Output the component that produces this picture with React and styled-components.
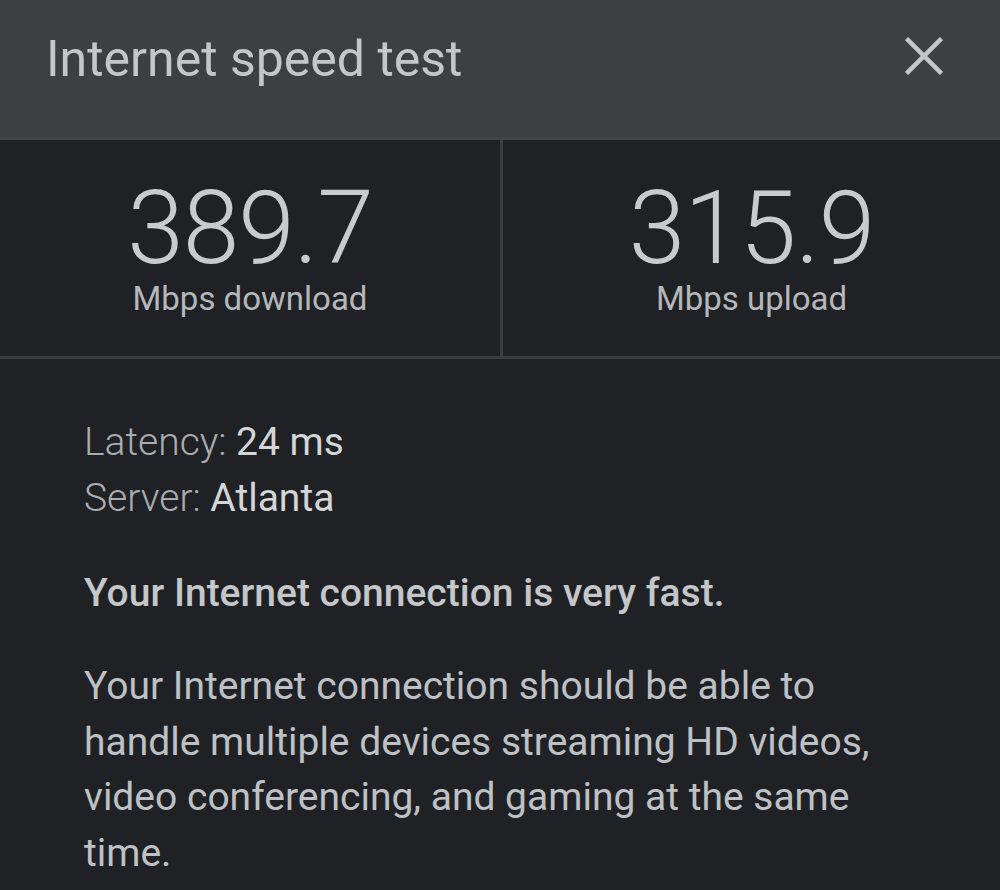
import styled, { createGlobalStyle } from "styled-components";

const GlobalStyle = createGlobalStyle`
  html, body {
    margin: 0;
    padding: 0;
    background: #202124;
  }
  body {
    font-family: Roboto, "Liberation Sans", sans-serif;
  }
`;

const Page = styled.div`
  width: 1000px;
  height: 890px;
  overflow: hidden;
  background: #202124;
  color: #bdc1c6;
`;

const Header = styled.header`
  height: 140px;
  box-sizing: border-box;
  padding: 30px 57px 0 46px;
  display: flex;
  align-items: flex-start;
  justify-content: space-between;
  background: #3c4043;
  border-bottom: 3px solid #404346;
`;

const Title = styled.h1`
  margin: 0;
  font-size: 50px;
  font-weight: 400;
  line-height: 58px;
  color: #c4c7ca;
`;

const CloseButton = styled.button`
  width: 38px;
  height: 38px;
  padding: 0;
  margin-top: 7px;
  border: none;
  background: none;
  display: flex;
`;

const Stats = styled.section`
  display: grid;
  grid-template-columns: 1fr 1fr;
  height: 219px;
  box-sizing: border-box;
  border-bottom: 3px solid #3a3d40;
`;

const Stat = styled.div`
  display: flex;
  flex-direction: column;
  align-items: center;
  padding-top: 38px;
  border-left: ${(p) => (p.$divider ? "3px solid #3a3d40" : "none")};
`;

const Value = styled.div`
  font-size: 102px;
  font-weight: 300;
  line-height: 101px;
  letter-spacing: -1px;
  color: #c8cacd;
`;

const Unit = styled.div`
  font-size: 33px;
  font-weight: 400;
  line-height: 40px;
  color: #b4b7bb;
`;

const Body = styled.section`
  padding: 55px 84px 0;
`;

const MetaLine = styled.div`
  font-size: 39px;
  line-height: 56px;
  font-weight: 300;
  color: #a9adb1;
`;

const MetaValue = styled.span`
  font-weight: 400;
  color: #d3d5d8;
`;

const Verdict = styled.p`
  margin: 39px 0 0;
  font-size: 39px;
  line-height: 56px;
  font-weight: 500;
  color: #c4c7ca;
`;

const Description = styled.p`
  margin: 38px 0 0;
  font-size: 39px;
  line-height: 55.6px;
  font-weight: 400;
  color: #bdc1c6;
`;

const CloseIcon = () => (
  <svg width="38" height="38" viewBox="0 0 38 38">
    <path d="M1.5 1.5 L36.5 36.5 M36.5 1.5 L1.5 36.5" stroke="#c4c7ca" strokeWidth="4.5" />
  </svg>
);

const App = () => {
  return (
    <Page>
      <GlobalStyle />
      <Header>
        <Title>Internet speed test</Title>
        <CloseButton aria-label="Close">
          <CloseIcon />
        </CloseButton>
      </Header>
      <Stats>
        <Stat>
          <Value>389.7</Value>
          <Unit>Mbps download</Unit>
        </Stat>
        <Stat $divider>
          <Value>315.9</Value>
          <Unit>Mbps upload</Unit>
        </Stat>
      </Stats>
      <Body>
        <MetaLine>
          Latency: <MetaValue>24 ms</MetaValue>
        </MetaLine>
        <MetaLine>
          Server: <MetaValue>Atlanta</MetaValue>
        </MetaLine>
        <Verdict>Your Internet connection is very fast.</Verdict>
        <Description>
          Your Internet connection should be able to handle multiple devices
          streaming HD videos, video conferencing, and gaming at the same time.
        </Description>
      </Body>
    </Page>
  );
};

export default App;
